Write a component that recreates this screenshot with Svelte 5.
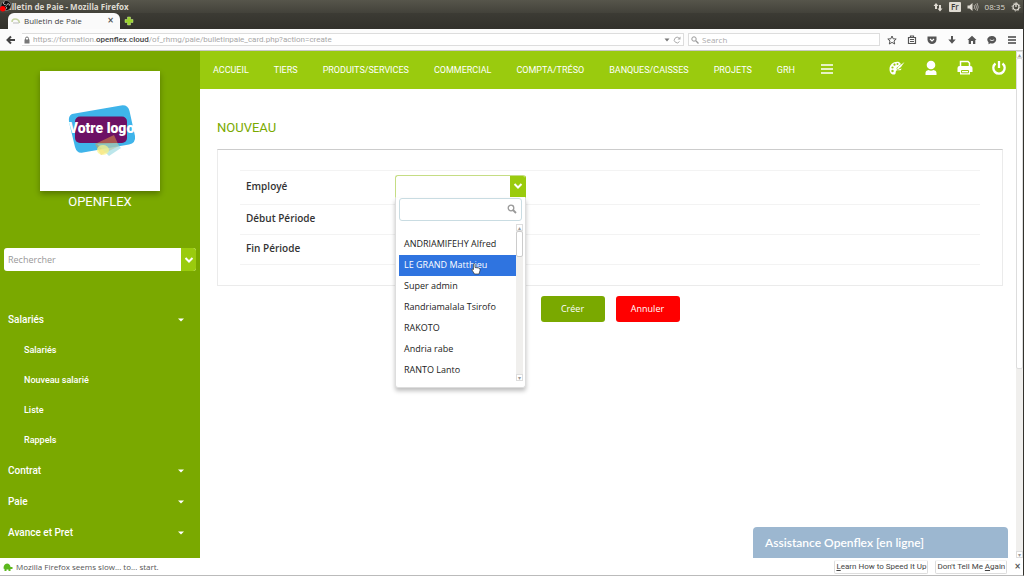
<script lang="ts">
	const navItems = [
		'ACCUEIL',
		'TIERS',
		'PRODUITS/SERVICES',
		'COMMERCIAL',
		'COMPTA/TRÉSO',
		'BANQUES/CAISSES',
		'PROJETS',
		'GRH'
	];

	const menus = [
		{ title: 'Salariés', items: ['Salariés', 'Nouveau salarié', 'Liste', 'Rappels'] },
		{ title: 'Contrat', items: [] },
		{ title: 'Paie', items: [] },
		{ title: 'Avance et Pret', items: [] }
	];

	const employees = [
		'ANDRIAMIFEHY Alfred',
		'LE GRAND Matthieu',
		'Super admin',
		'Randriamalala Tsirofo',
		'RAKOTO',
		'Andria rabe',
		'RANTO Lanto'
	];

	let active = $state(1);
	let open = $state(true);
	let showNotice = $state(true);
</script>

{#snippet chevron()}
	<svg class="chevron" viewBox="0 0 10 8" aria-hidden="true">
		<path d="M1.5 2 L5 5.5 L8.5 2" fill="none" stroke="#fff" stroke-width="2" />
	</svg>
{/snippet}

<div class="window">
	<header class="titlebar">
		<div class="recorder" aria-hidden="true">
			<svg viewBox="0 0 14 14">
				<circle cx="6.5" cy="6" r="5.5" fill="#111" stroke="#8a8a86" stroke-width="0.8" />
				<path d="M6 5 C3 5 3 2 5 2 M7 6 C8 3 11 4 10 6 M6 7 C8 8 7 10 5 10" fill="none" stroke="#ddd" />
				<circle cx="3" cy="9.5" r="3" fill="#f00" />
			</svg>
		</div>
		<span class="title">Bulletin de Paie - Mozilla Firefox</span>
		<div class="tray">
			<svg width="10" height="10" viewBox="0 0 10 10" fill="#dfdbd2">
				<path d="M3 1 L5.5 4 H4 V7 H2 V4 H0.5z M7 9.5 L4.5 6.5 H6 V3 H8 V6.5 H9.5z" />
			</svg>
			<span class="lang">Fr</span>
			<svg width="12" height="10" viewBox="0 0 12 10">
				<path d="M0.5 3.5 H2.5 L5.5 1 V9 L2.5 6.5 H0.5z" fill="#dfdbd2" />
				<path d="M7 3 Q8.5 5 7 7 M8.5 2 Q10.5 5 8.5 8 M10 1 Q12.5 5 10 9" fill="none" stroke="#a5a29a" />
			</svg>
			<span class="clock">08:35</span>
			<svg width="10" height="10" viewBox="0 0 10 10" fill="none" stroke="#dfdbd2">
				<circle cx="5" cy="5" r="3" stroke-width="1.2" />
				<circle cx="5" cy="5" r="4" stroke-dasharray="1.2 1.94" />
				<path d="M5 0.5 V5" stroke-width="1.3" />
			</svg>
		</div>
	</header>

	<div class="tabs">
		<div class="tab">
			<svg width="10" height="8" viewBox="0 0 10 8" fill="none">
				<path d="M1 5 Q1 2 4 2 Q8 2 8.5 6" stroke="#c5d3a0" stroke-width="1.5" />
				<path d="M2 6 H8" stroke="#bbb" />
			</svg>
			<span>Bulletin de Paie</span>
			<button class="plain close" aria-label="Fermer l'onglet">×</button>
		</div>
		<button class="plain" aria-label="Nouvel onglet">
			<svg width="10" height="10" viewBox="0 0 10 10">
				<path d="M3.5 1 H6.5 V3.5 H9 V6.5 H6.5 V9 H3.5 V6.5 H1 V3.5 H3.5z" fill="#9bd32c" stroke="#c6e889" stroke-width="0.5" />
			</svg>
		</button>
	</div>

	<div class="toolbar">
		<button class="plain back" aria-label="Retour">
			<svg width="10" height="10" viewBox="0 0 10 10">
				<path d="M5 1.5 L1.5 5 L5 8.5 M2 5 H9" fill="none" stroke="#444" stroke-width="2" />
			</svg>
		</button>
		<div class="urlbar">
			<svg width="6" height="8" viewBox="1 0 6 8">
				<path d="M2.5 4 V2.5 a1.5 1.5 0 0 1 3 0 V4" fill="none" stroke="#777" />
				<rect x="1.5" y="3.5" width="5" height="4" fill="#777" />
			</svg>
			<span class="url">https://formation.<b>openflex.cloud</b>/of_rhmg/paie/bulletinpaie_card.php?action=create</span>
			<svg width="6" height="4" viewBox="0 0 6 4"><path d="M0.5 0.5 H5.5 L3 3.5z" fill="#777" /></svg>
			<svg width="8" height="8" viewBox="0 0 8 8">
				<path d="M6.5 5.5 A2.8 2.8 0 1 1 6.2 2.2" fill="none" stroke="#aaa" />
				<path d="M7.5 0.5 V3.5 H4.5z" fill="#aaa" />
			</svg>
		</div>
		<label class="searchbar">
			<svg width="8" height="8" viewBox="0 0 8 8" fill="none" stroke="#999">
				<circle cx="3" cy="3" r="2.2" />
				<path d="M4.8 4.8 L7.5 7.5" stroke-width="1.3" />
			</svg>
			<input type="search" placeholder="Search" aria-label="Search" />
		</label>
		<div class="tools">
			<svg viewBox="0 0 10 10"><path d="M5 1 L6.2 3.8 L9.2 4 L7 6 L7.7 9 L5 7.4 L2.3 9 L3 6 L0.8 4 L3.8 3.8z" fill="none" stroke="#555" /></svg>
			<svg viewBox="0 0 10 10"><path d="M3.5 2.5 V1 H6.5 V2.5 M1.5 2.5 H8.5 V8.5 H1.5z M3 4.5 H7 M3 6.5 H7" fill="none" stroke="#555" stroke-width="1.2" /></svg>
			<svg viewBox="0 0 10 10"><path d="M0.5 1.5 H9.5 V4.5 a4.5 4.5 0 0 1 -9 0z" fill="#555" /><path d="M3 4 L5 6 L7 4" fill="none" stroke="#fff" stroke-width="1.2" /></svg>
			<svg viewBox="0 0 10 10"><path d="M4 1 H6 V4.5 H8.7 L5 8.8 L1.3 4.5 H4z" fill="#555" /></svg>
			<svg viewBox="0 0 10 10"><path d="M5 0.8 L9.5 5 H8.3 V9 H6 V6 H4 V9 H1.7 V5 H0.5z" fill="#555" /></svg>
			<svg viewBox="0 0 10 10"><path d="M5 1 a4.3 3.7 0 1 1 -1.5 7.2 L1.5 9.3 V7.2 A4.3 3.7 0 0 1 5 1z" fill="#555" /><path d="M2.8 4.8 Q5 6.5 7.2 4.8" fill="none" stroke="#fff" stroke-width="0.8" /></svg>
			<svg viewBox="0 0 10 10"><path d="M1 2 H9 M1 5 H9 M1 8 H9" stroke="#444" stroke-width="1.6" /></svg>
		</div>
	</div>

	<div class="viewport">
		<aside class="sidebar">
			<div class="logo">
				<svg viewBox="0 0 120 120">
					<path d="M32 43 L81 34.5 Q88 33.5 89.5 40 L95 65 Q96 72 89 73.5 L43 81.5 Q37 83 35 76 L29 51 Q28 45 32 43z" fill="#3fb4ea" />
					<rect x="35" y="45.5" width="52" height="26.5" rx="5" fill="#6d1065" />
					<path d="M55 73 L74 64 L79 75 L61 84z" fill="#e5a23c" opacity="0.5" />
					<path d="M57 73 L77 72 L81 77 L69 85z" fill="#8fd5dd" opacity="0.6" />
					<ellipse cx="63" cy="79" rx="6" ry="5" fill="#fbf588" opacity="0.7" />
					<text x="61.5" y="62" text-anchor="middle">Votre logo</text>
				</svg>
			</div>
			<div class="company">OPENFLEX</div>
			<div class="combo side-search">
				<select aria-label="Rechercher">
					<option>Rechercher</option>
				</select>
				<span class="arrow">{@render chevron()}</span>
			</div>
			<nav class="menu" aria-label="Ressources humaines">
				{#each menus as menu}
					<button class="plain group">
						{menu.title}
						<svg width="6" height="4" viewBox="0 0 6 4"><path d="M0 0.5 H6 L3 3.5z" fill="#fff" /></svg>
					</button>
					{#each menu.items as item}
						<a class="sub" href="#{item}">{item}</a>
					{/each}
				{/each}
			</nav>
		</aside>

		<div class="page">
			<div class="topnav">
				<nav>
					{#each navItems as item}
						<a href="#{item}">{item}</a>
					{/each}
					<button class="plain" aria-label="Plus">
						<svg width="14" height="14" viewBox="0 0 14 14"><path d="M1 2 H13 M1 6 H13 M1 10 H13" stroke="#fff" stroke-width="1.6" /></svg>
					</button>
				</nav>
				<div class="actions">
					<button class="plain" aria-label="Thème">
						<svg viewBox="0 0 16 16">
							<path d="M10 2 C5 1 0.5 4.5 0.5 9 C0.5 13 3 15 5.5 14.5 C7.5 14 6 11.5 7.5 10.5 C9 9.5 12 11.5 12.5 8.5 L8 10 L7.5 8 L12 4z" fill="#fff" />
							<path d="M7.5 9.5 L9.5 6.5 L15.5 2 L12 7 L9.5 9z" fill="#fff" />
							<g fill="#9acb0e">
								<circle cx="3.5" cy="7.5" r="1.1" /><circle cx="5.5" cy="4.7" r="1.1" />
								<circle cx="8.5" cy="4" r="1" /><circle cx="3.5" cy="11" r="1.2" />
							</g>
						</svg>
					</button>
					<button class="plain" aria-label="Utilisateur">
						<svg viewBox="0 0 16 16"><circle cx="8" cy="5" r="4.3" fill="#fff" /><path d="M2.5 15 V13 Q2.5 10.5 5.5 10 Q8 11.5 10.5 10 Q13.5 10.5 13.5 13 V15z" fill="#fff" /></svg>
					</button>
					<button class="plain" aria-label="Imprimer">
						<svg viewBox="0 0 16 16">
							<path d="M3.5 6 V1.5 H11 L12.5 3 V6" fill="none" stroke="#fff" stroke-width="1.5" />
							<path d="M2.5 6 H13.5 Q15.5 6 15.5 8 V12 H13 V14.5 H3 V12 H0.5 V8 Q0.5 6 2.5 6z" fill="#fff" />
							<path d="M4.5 10.5 H11.5 V12.8 H4.5z" fill="none" stroke="#9acb0e" />
						</svg>
					</button>
					<button class="plain" aria-label="Déconnexion">
						<svg viewBox="0 0 16 16" fill="none" stroke="#fff" stroke-width="2.3"><path d="M4.5 3.5 A5.7 5.7 0 1 0 11.5 3.5 M8 1 V8" /></svg>
					</button>
				</div>
			</div>

			<main>
				<h1>NOUVEAU</h1>
				<form onsubmit={(e) => e.preventDefault()}>
					<div class="panel">
						<div class="row first">
							<label for="employe">Employé</label>
							<div class="field">
								<div class="combo employee">
									<select id="employe" onmousedown={() => (open = !open)}>
										<option></option>
									</select>
									<span class="arrow">{@render chevron()}</span>
								</div>
								{#if open}
									<div class="drop">
										<div class="filter">
											<input type="text" aria-label="Filtrer les employés" />
											<svg width="10" height="10" viewBox="0 0 10 10" fill="none" stroke="#999">
												<circle cx="4" cy="4" r="2.8" stroke-width="1.3" />
												<path d="M6 6 L9 9" stroke-width="1.8" />
											</svg>
										</div>
										<div class="results">
											<ul role="listbox" aria-label="Employé">
												{#each employees as name, i}
													<li role="option" aria-selected={i === active} class:active={i === active} onmouseenter={() => (active = i)}>
														{name}
														{#if i === active}
															<svg class="pointer" viewBox="0 0 10 12">
																<path d="M2.5 1 Q3.5 0 4 1.5 V4.5 L8 5 Q9.5 5.5 9 7.5 L8 11 H3.5 L1 7 Q0.5 5.5 2.5 6.5z" fill="#fff" stroke="#333" stroke-width="0.7" />
															</svg>
														{/if}
													</li>
												{/each}
											</ul>
											<div class="mini-scroll" aria-hidden="true">
												<i>▴</i>
												<b></b>
												<i>▾</i>
											</div>
										</div>
									</div>
								{/if}
							</div>
						</div>
						<div class="row"><span>Début Période</span></div>
						<div class="row"><span>Fin Période</span></div>
					</div>
					<div class="buttons">
						<button class="btn create" type="submit">Créer</button>
						<button class="btn cancel" type="button">Annuler</button>
					</div>
				</form>
			</main>
		</div>

		<div class="scrollbar" aria-hidden="true">
			<i>▴</i>
			<div class="track"><b></b></div>
			<i>▾</i>
		</div>

		<button class="plain assist">Assistance Openflex [en ligne]</button>
	</div>

	{#if showNotice}
		<footer class="notice">
			<div class="message">
				<svg width="10" height="10" viewBox="0 0 10 10">
					<path d="M0.5 6.5 Q0.5 2 4 1.5 Q7 1.5 7.5 5 L9.5 5 V7 H7.5 V9 H5.5 V7.5 H3.5 V9 H1.5 V7z" fill="#5cb81f" />
				</svg>
				Mozilla Firefox seems slow... to... start.
			</div>
			<button><u>L</u>earn How to Speed It Up</button>
			<button>Don't Tell Me <u>A</u>gain</button>
			<button class="plain close" aria-label="Fermer" onclick={() => (showNotice = false)}>×</button>
		</footer>
	{/if}
</div>

<style>
	:global(body) {
		margin: 0;
		background: #fff;
	}

	.window,
	.window :global(*) {
		box-sizing: border-box;
	}

	.window {
		display: flex;
		flex-direction: column;
		min-height: 100vh;
		border-right: 1px solid #33322d;
		border-bottom: 1px solid #bbb;
		font-family: Roboto, sans-serif;
		font-size: 10px;
	}

	button,
	input,
	select {
		font: inherit;
	}

	svg {
		flex: none;
		display: block;
	}

	.plain {
		border: 0;
		padding: 0;
		background: none;
		color: inherit;
	}

	/* browser chrome */
	.titlebar {
		position: relative;
		display: flex;
		align-items: center;
		justify-content: space-between;
		height: 13px;
		padding: 0 2px 0 1px;
		background: linear-gradient(#56554b, #43423a);
		color: #dfdbd2;
		font-family: 'Open Sans', sans-serif;
		font-size: 8px;
		line-height: 12px;
	}

	.title {
		font-weight: 700;
	}

	.recorder {
		position: absolute;
		left: 0;
		top: 0;
		width: 13px;
		height: 13px;
	}

	.tray {
		display: flex;
		align-items: center;
		gap: 6px;
	}

	.lang {
		padding: 0 2px;
		border-radius: 1px;
		background: #dfdbd2;
		color: #3c3b37;
		line-height: 10px;
		font-weight: 600;
	}

	.tabs {
		display: flex;
		align-items: center;
		gap: 4px;
		height: 16px;
		padding-left: 8px;
		background: linear-gradient(#3c3b34, #32312b);
	}

	.tab {
		display: flex;
		align-items: center;
		gap: 3px;
		width: 112px;
		height: 16px;
		padding: 0 6px 0 3px;
		border-radius: 6px 6px 0 0;
		background: #fafafa;
		color: #444;
		font-family: 'Open Sans', sans-serif;
		font-size: 8px;
		line-height: 14px;
	}

	.close {
		margin-left: auto;
		font-family: 'DejaVu Sans', sans-serif;
		font-size: 8px;
		font-weight: 700;
		line-height: 12px;
		color: #555;
	}

	.toolbar {
		display: flex;
		align-items: center;
		gap: 4px;
		height: 22px;
		padding: 0 6px 0 4px;
		border-bottom: 1px solid #c8c8c4;
		background: #fcfcfc;
		font-family: 'Open Sans', sans-serif;
		font-size: 8px;
	}

	.back {
		display: grid;
		place-items: center;
		width: 14px;
		height: 16px;
	}

	.urlbar,
	.searchbar {
		display: flex;
		align-items: center;
		gap: 3px;
		height: 13px;
		padding: 0 2px;
		border: 1px solid #ddd;
		background: #fff;
	}

	.urlbar {
		flex: 1;
		min-width: 0;
		border-left: 0;
	}

	.url {
		flex: 1;
		overflow: hidden;
		white-space: nowrap;
		font-family: Roboto, sans-serif;
		color: #a8a8a8;
	}

	.url b {
		font-weight: 500;
		color: #444;
	}

	.searchbar {
		width: 192px;
	}

	.searchbar input {
		width: 100%;
		padding: 0;
		border: 0;
		outline: 0;
		background: none;
	}

	.searchbar input::placeholder {
		color: #aaa;
	}

	.tools {
		display: flex;
		justify-content: space-between;
		width: 133px;
		padding-left: 3px;
	}

	.tools svg {
		width: 10px;
		height: 10px;
	}

	/* page */
	.viewport {
		position: relative;
		flex: 1;
		display: flex;
	}

	.sidebar {
		flex: none;
		width: 200px;
		padding-top: 20px;
		background: #7aa900;
		color: #fff;
	}

	.logo {
		width: 120px;
		height: 120px;
		margin: 0 auto;
		background: #fff;
		box-shadow: 0 3px 6px rgba(0, 0, 0, 0.3);
	}

	.logo text {
		fill: #fff;
		font-family: Roboto, sans-serif;
		font-size: 14px;
		font-weight: 900;
	}

	.company {
		margin-top: 2px;
		line-height: 18px;
		font-size: 13px;
		text-align: center;
	}

	.combo {
		display: flex;
		height: 23px;
		overflow: hidden;
		border-radius: 3px;
		background: #fff;
	}

	.combo select {
		flex: 1;
		min-width: 0;
		padding: 0 4px;
		border: 0;
		outline: 0;
		appearance: none;
		background: none;
		color: #999;
	}

	.arrow {
		display: grid;
		place-items: center;
		width: 15px;
		background: #9acb0e;
	}

	.chevron {
		width: 10px;
		height: 8px;
	}

	.side-search {
		margin: 37px 4px 0;
		font-family: 'Open Sans', sans-serif;
		font-size: 9px;
	}

	.menu {
		display: flex;
		flex-direction: column;
		margin-top: 33px;
		padding-bottom: 10px;
	}

	.group {
		display: flex;
		align-items: center;
		justify-content: space-between;
		height: 31px;
		padding: 0 16px 0 8px;
		font-weight: 500;
	}

	.sub {
		height: 30px;
		padding-left: 24px;
		line-height: 30px;
		font-size: 9px;
		font-weight: 500;
		color: #fff;
		text-decoration: none;
	}

	.page {
		flex: 1;
		min-width: 0;
	}

	.topnav {
		display: flex;
		justify-content: space-between;
		height: 38px;
		padding: 0 9px 0 13px;
		background: #9acb0e;
		color: #fff;
		font-size: 9px;
	}

	.topnav nav,
	.actions {
		display: flex;
		align-items: center;
		gap: 25px;
	}

	.topnav a {
		color: #fff;
		text-decoration: none;
	}

	.topnav .actions {
		gap: 18px;
		padding-bottom: 4px;
	}

	.actions svg {
		width: 16px;
		height: 16px;
	}

	main {
		padding: 29px 13px 0 17px;
	}

	h1 {
		margin: 0 0 11px;
		line-height: 20px;
		font-size: 13px;
		font-weight: 400;
		color: #7aa900;
	}

	.panel {
		padding: 20px 22px;
		border: 1px solid #ebebeb;
		border-top-color: #ccc;
		font-family: 'Open Sans', sans-serif;
	}

	.row {
		display: flex;
		align-items: center;
		height: 30px;
		padding: 0 0 3px 6px;
		border-bottom: 1px solid #f3f3f3;
		font-weight: 600;
		color: #333;
	}

	.row.first {
		height: 35px;
		border-top: 1px solid #f3f3f3;
	}

	.row > label,
	.row > span {
		width: 149px;
	}

	.field {
		position: relative;
		width: 131px;
	}

	.employee {
		border: 1px solid #c5dd84;
		border-right-color: #9acb0e;
		border-bottom-color: #fff;
		border-radius: 3px 3px 0 0;
	}

	.drop {
		position: absolute;
		z-index: 2;
		top: 23px;
		left: 0;
		width: 100%;
		padding: 0 3px 6px;
		border: 1px solid #ddd;
		border-top: 0;
		border-radius: 0 0 3px 3px;
		background: #fff;
		box-shadow: 0 3px 4px rgba(0, 0, 0, 0.25);
		font-size: 9px;
		font-weight: 400;
		color: #222;
	}

	.filter {
		display: flex;
		align-items: center;
		height: 23px;
		padding: 0 4px;
		border: 1px solid #c9dce2;
		border-radius: 3px;
	}

	.filter input {
		width: 100%;
		border: 0;
		outline: 0;
		background: none;
	}

	.results {
		display: flex;
		margin: 3px -1px 0 0;
	}

	ul {
		flex: 1;
		margin: 0;
		padding: 10px 0 0;
		list-style: none;
	}

	li {
		position: relative;
		height: 21px;
		padding-left: 5px;
		line-height: 20px;
		white-space: nowrap;
	}

	li.active {
		background: #2f74e0;
		color: #fff;
	}

	.pointer {
		position: absolute;
		left: 72px;
		top: 8px;
		width: 10px;
		height: 12px;
	}

	.mini-scroll,
	.scrollbar {
		display: flex;
		flex-direction: column;
		width: 7px;
		background: #f0efed;
		color: #999;
	}

	.mini-scroll i,
	.scrollbar i {
		height: 7px;
		border: 1px solid #ddd;
		background: #fff;
		font: 6px/5px 'DejaVu Sans', sans-serif;
		text-align: center;
	}

	.mini-scroll b {
		height: 26px;
		margin-bottom: auto;
		border: 1px solid #ccc;
		border-radius: 2px;
		background: #fff;
	}

	.track {
		flex: 1;
	}

	.track b {
		display: block;
		height: 63%;
		border: 1px solid #ddd;
		border-radius: 2px;
		background: #fff;
	}

	.buttons {
		display: flex;
		justify-content: center;
		gap: 11px;
		margin-top: 10px;
		font-family: 'Open Sans', sans-serif;
		font-size: 9px;
	}

	.btn {
		width: 64px;
		height: 26px;
		padding: 0 0 2px;
		border: 0;
		border-radius: 3px;
		color: #fff;
	}

	.create {
		background: #7aa900;
	}

	.cancel {
		background: #f00;
	}

	.assist {
		position: absolute;
		right: 15px;
		bottom: 0;
		width: 255px;
		height: 31px;
		padding-left: 12px;
		border-radius: 4px 4px 0 0;
		background: #9cb7d0;
		color: #fff;
		font-family: Lato, sans-serif;
		font-size: 12px;
		font-weight: 600;
		text-align: left;
	}

	.notice {
		display: flex;
		align-items: center;
		gap: 7px;
		height: 17px;
		padding: 0 2px 0 3px;
		background: #fff;
		font-size: 8px;
		color: #555;
	}

	.message {
		flex: 1;
		display: flex;
		align-items: center;
		gap: 3px;
		font-family: 'Open Sans', sans-serif;
		font-weight: 400;
	}

	.notice button:not(.close) {
		height: 14px;
		padding: 0 1px;
		border: 1px solid #ddd;
		border-top-color: #f4f4f4;
		border-radius: 2px;
		background: #fff;
		color: #444;
	}

	.notice .close {
		margin: 0;
	}
</style>
